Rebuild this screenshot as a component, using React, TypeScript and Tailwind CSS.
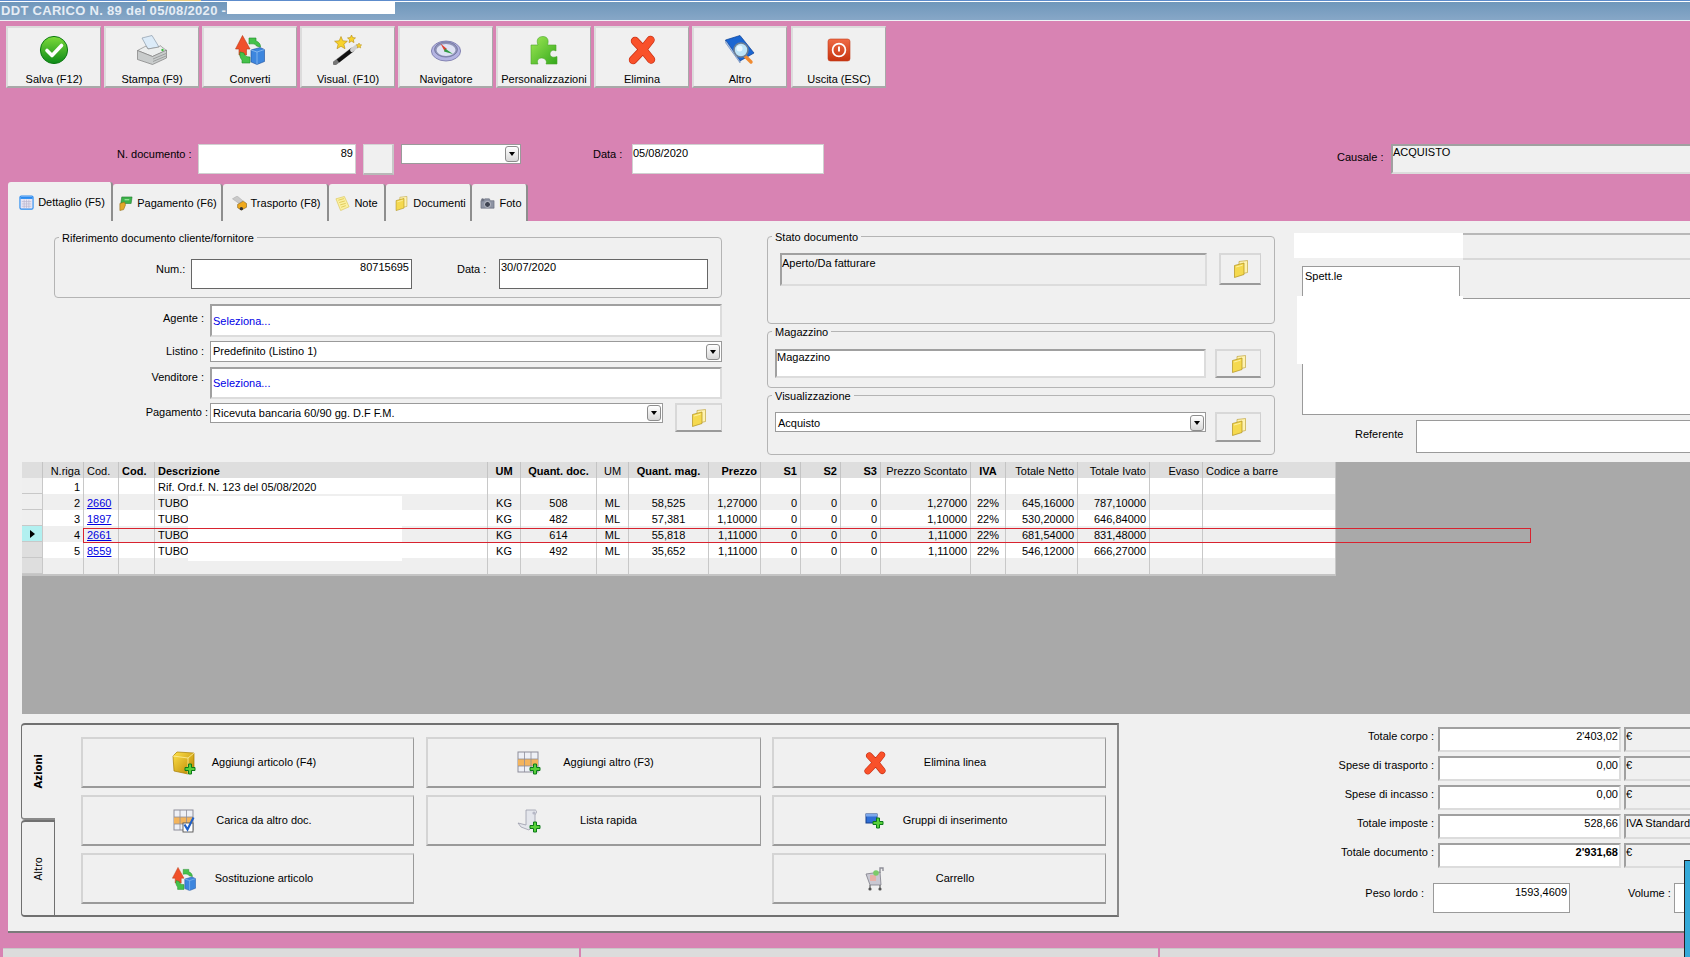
import type { JSX, ReactNode } from 'react'

type IconProps = { className?: string }

function CheckIcon({ className }: IconProps): JSX.Element {
  return (
    <svg viewBox="0 0 30 30" className={className}>
      <defs>
        <linearGradient id="chk" x1="0" y1="0" x2="0" y2="1">
          <stop offset="0" stopColor="#7ddb3a" />
          <stop offset="1" stopColor="#0d8a18" />
        </linearGradient>
      </defs>
      <circle cx="15" cy="15" r="13.6" fill="url(#chk)" stroke="#0e7a14" />
      <path d="M8 15.5l5 5 9.5-10" fill="none" stroke="#fff" strokeWidth="3.6" strokeLinecap="round" strokeLinejoin="round" />
    </svg>
  )
}

function PrinterIcon({ className }: IconProps): JSX.Element {
  return (
    <svg viewBox="0 0 30 30" className={className}>
      <path d="M5 3l10-2.5 7 11.5-11 2z" fill="#dcebf8" stroke="#8b9bab" strokeWidth="0.7" />
      <path d="M.5 15.5L9 11l2 3 11-2 1-1.5 6.5 5-14 6z" fill="#eceeee" stroke="#8a8a8a" strokeWidth="0.7" />
      <path d="M.5 15.5l15 6 14-6.5v8l-14 6.5-15-5z" fill="#c9cccc" stroke="#7d7d7d" strokeWidth="0.7" />
      <path d="M16 24l13-5.5M16 26.5l13-5.5" stroke="#8f9292" strokeWidth="0.8" />
      <circle cx="25.5" cy="15" r="1.2" fill="#3fbf3f" />
    </svg>
  )
}

function ConvertIcon({ className }: IconProps): JSX.Element {
  return (
    <svg viewBox="0 0 30 30" className={className}>
      <path d="M7.5.5L15 14h-3.5v6H4v-6H.5z" fill="#f0502a" stroke="#b93a16" strokeWidth="0.6" />
      <path d="M14 3h7v3c3 1 4.5 3 4.5 6l-4-1c-1-2-3-2.5-7.5-2z" fill="#45c24a" stroke="#1f8a2a" strokeWidth="0.6" />
      <path d="M5 17l4 1c.5 3 2.5 4 6 4v6H7v-3c-2-2-2.5-5-2-8z" fill="#45c24a" stroke="#1f8a2a" strokeWidth="0.6" />
      <path d="M16 15l9-2.5 4.5 2v12L22 29.5 16 27z" fill="#3d86de" stroke="#1c4f9c" strokeWidth="0.6" />
      <path d="M16 15l6 2 7.5-2.5M22 17v12.5" fill="none" stroke="#9cc6f3" strokeWidth="0.7" />
    </svg>
  )
}

function WandIcon({ className }: IconProps): JSX.Element {
  return (
    <svg viewBox="0 0 30 30" className={className}>
      <path d="M2 28L19 15" stroke="#777" strokeWidth="4.6" strokeLinecap="round" />
      <path d="M5 26L19 15" stroke="#111" strokeWidth="3.6" />
      <path d="M19 15l5-4" stroke="#cfcfcf" strokeWidth="4" strokeLinecap="round" />
      <path d="M8 1.5l1.8 4.3 4.6.4-3.5 3 1.1 4.5-4-2.4-4 2.4 1.1-4.5-3.5-3 4.6-.4z" fill="#f7d22c" stroke="#b58a10" strokeWidth="0.6" />
      <path d="M18.5 0l1.2 2.6 2.8.3-2.1 1.9.6 2.8-2.5-1.4-2.5 1.4.6-2.8-2.1-1.9 2.8-.3z" fill="#f7d22c" stroke="#b58a10" strokeWidth="0.6" />
      <path d="M26 8l.8 1.7 1.9.2-1.4 1.3.4 1.8-1.7-1-1.7 1 .4-1.8-1.4-1.3 1.9-.2z" fill="#f7d22c" stroke="#b58a10" strokeWidth="0.5" />
    </svg>
  )
}

function CompassIcon({ className }: IconProps): JSX.Element {
  return (
    <svg viewBox="0 0 30 30" className={className}>
      <ellipse cx="15" cy="16" rx="14.6" ry="10" fill="#b4b4e2" stroke="#7474a6" strokeWidth="0.8" />
      <ellipse cx="15" cy="14.5" rx="11.5" ry="7.6" fill="#8f93b8" stroke="#6a6d96" strokeWidth="0.7" />
      <ellipse cx="15" cy="15" rx="9.5" ry="6" fill="#dfe2f4" />
      <path d="M9.5 8.5l6.5 5.5-2.5 2z" fill="#e0402f" />
      <path d="M14 13.5l8 5.5-9-2.5z" fill="#2f9a44" />
    </svg>
  )
}

function PuzzleIcon({ className }: IconProps): JSX.Element {
  return (
    <svg viewBox="0 0 30 30" className={className}>
      <defs>
        <linearGradient id="pzl" x1="0" y1="0" x2="1" y2="1">
          <stop offset="0" stopColor="#9fe855" />
          <stop offset="1" stopColor="#33a81c" />
        </linearGradient>
      </defs>
      <path
        d="M2 10H9C7 5 9 1.5 14 1.5S20 6 18.5 10H27V16C24 14 21 16 21 19S24 23 28 21.5V29H17C18.5 26 16 23 12.5 23S7.5 26 9 29H2Z"
        fill="url(#pzl)"
        stroke="#4aa62a"
        strokeWidth="0.6"
      />
    </svg>
  )
}

function CrossIcon({ className }: IconProps): JSX.Element {
  return (
    <svg viewBox="0 0 30 30" className={className}>
      <path d="M8 6l8 8.5M23.5 5L16 14.5M16 14.5L6 25M16 14.5l8 10" stroke="#c22c12" strokeWidth="8.4" strokeLinecap="round" fill="none" />
      <path d="M8 6l8 8.5M23.5 5L16 14.5M16 14.5L6 25M16 14.5l8 10" stroke="#f9512a" strokeWidth="7" strokeLinecap="round" fill="none" />
    </svg>
  )
}

function BookIcon({ className }: IconProps): JSX.Element {
  return (
    <svg viewBox="0 0 30 30" className={className}>
      <path d="M.5 5L15 .5 29 18 15 26z" fill="#1a66d2" stroke="#0c3f94" strokeWidth="0.7" />
      <path d="M.5 5L15 26v1.8L.8 8z" fill="#bcd0ea" stroke="#0c3f94" strokeWidth="0.4" />
      <path d="M20 21l6 6" stroke="#f08a30" strokeWidth="3.4" strokeLinecap="round" />
      <circle cx="16" cy="15" r="7" fill="#bde4f8" stroke="#6d7f94" strokeWidth="1.6" />
      <circle cx="14.5" cy="13.5" r="3" fill="#eaf8ff" />
    </svg>
  )
}

function PowerIcon({ className }: IconProps): JSX.Element {
  return (
    <svg viewBox="0 0 30 30" className={className}>
      <defs>
        <linearGradient id="pow" x1="0" y1="0" x2="0" y2="1">
          <stop offset="0" stopColor="#ef6a45" />
          <stop offset="1" stopColor="#c7330f" />
        </linearGradient>
      </defs>
      <rect x="4" y="4" width="22" height="22" rx="2.5" fill="url(#pow)" stroke="#c23c1c" strokeWidth="0.6" />
      <circle cx="15" cy="15" r="6.4" fill="none" stroke="#fff" strokeWidth="1.7" />
      <path d="M15 11.4v5" stroke="#fff" strokeWidth="1.9" />
    </svg>
  )
}

function FolderIcon({ className }: IconProps): JSX.Element {
  return (
    <svg viewBox="0 0 16 18" className={className}>
      <path d="M6 1.5l8.5-1v12l-8.5 2z" fill="#fff3b0" stroke="#b99a2a" strokeWidth="0.6" />
      <path d="M1.5 5.5L11 3v11.5l-9.5 3z" fill="#f5d94e" stroke="#b0901c" strokeWidth="0.7" />
      <path d="M3 7l6.5-1.8" stroke="#fff6b8" strokeWidth="0.8" />
    </svg>
  )
}

function CalendarIcon({ className }: IconProps): JSX.Element {
  return (
    <svg viewBox="0 0 16 16" className={className}>
      <rect x="1" y="1" width="14" height="14" rx="1.5" fill="#e8e6f4" stroke="#2a8cf0" strokeWidth="1.2" />
      <path d="M1.5 3h13" stroke="#2a8cf0" strokeWidth="2.4" />
      <path d="M3 7h10M3 9.5h10M3 12h10M5.5 5v9M8 5v9M10.5 5v9" stroke="#b7b4cc" strokeWidth="0.7" />
    </svg>
  )
}

function MoneyIcon({ className }: IconProps): JSX.Element {
  return (
    <svg viewBox="0 0 16 16" className={className}>
      <path d="M4 1h11l-1 7H3z" fill="#3cb24a" stroke="#1d7a2a" strokeWidth="0.6" />
      <path d="M2 8l5-1.5 1 3-2 5-4 1z" fill="#e2a92a" stroke="#8f6a12" strokeWidth="0.6" />
      <path d="M7 4h5" stroke="#a5eaa5" strokeWidth="1.2" />
    </svg>
  )
}

function TruckIcon({ className }: IconProps): JSX.Element {
  return (
    <svg viewBox="0 0 16 16" className={className}>
      <path d="M.5 3l5-3 6 5-4 3z" fill="#c9c9c9" stroke="#a0a0a0" strokeWidth="0.5" />
      <path d="M6 9l6-3.5 3.5 2.5v4L10 15l-4-2.5z" fill="#efa91c" stroke="#7d5a10" strokeWidth="0.6" />
      <circle cx="10" cy="13.5" r="1.8" fill="#333" />
    </svg>
  )
}

function NoteIcon({ className }: IconProps): JSX.Element {
  return (
    <svg viewBox="0 0 16 16" className={className}>
      <path d="M1 3l9-2.5 5 11-9 4z" fill="#fbf0a0" stroke="#dcc75a" strokeWidth="0.7" />
      <path d="M3.5 4.5l6-1.7M4.5 7l6-1.7M5.5 9.5l6-1.7M6.5 12l5-1.7" stroke="#d4b93c" strokeWidth="0.7" />
    </svg>
  )
}

function CameraIcon({ className }: IconProps): JSX.Element {
  return (
    <svg viewBox="0 0 16 16" className={className}>
      <path d="M1 5h3l1-2h5l1 2h4v8H1z" fill="#8d93a3" stroke="#5e6372" strokeWidth="0.6" />
      <circle cx="8" cy="9" r="3.2" fill="#3f4452" stroke="#d5d8e0" strokeWidth="0.9" />
      <circle cx="2.8" cy="4" r="1.6" fill="#6d7280" />
    </svg>
  )
}

// croce verde in basso a destra, comune alle icone "aggiungi" (viewBox 24)
function PlusMark(): JSX.Element {
  return (
    <path
      d="M16.5 13h3v3.5h3.5v3h-3.5v3.5h-3v-3.5H13v-3h3.5z"
      fill="#58d13a"
      stroke="#0c7a1a"
      strokeWidth="1"
    />
  )
}

function BoxPlusIcon({ className }: IconProps): JSX.Element {
  return (
    <svg viewBox="0 0 24 24" className={className}>
      <defs>
        <linearGradient id="box" x1="0" y1="0" x2="1" y2="1">
          <stop offset="0" stopColor="#ffe24a" />
          <stop offset="1" stopColor="#b98400" />
        </linearGradient>
      </defs>
      <path d="M1 5l4-4 17 1v15l-6 6-14-3z" fill="url(#box)" stroke="#a67c00" strokeWidth="0.7" />
      <path d="M1 5l15 2 6-5M16 7v16" fill="none" stroke="#fff0a0" strokeWidth="0.8" />
      <PlusMark />
    </svg>
  )
}

function GridPlusIcon({ className }: IconProps): JSX.Element {
  return (
    <svg viewBox="0 0 24 24" className={className}>
      <rect x="1" y="1" width="20" height="20" fill="#eef0f6" stroke="#8d8d9a" />
      <rect x="1" y="8" width="20" height="7" fill="#f3b45c" />
      <path d="M7.5 1v20M14 1v20M1 8h20M1 15h20" stroke="#8d8d9a" strokeWidth="0.8" />
      <PlusMark />
    </svg>
  )
}

function GridCheckIcon({ className }: IconProps): JSX.Element {
  return (
    <svg viewBox="0 0 24 24" className={className}>
      <rect x="2" y="1" width="19" height="20" fill="#eef0f6" stroke="#8d8d9a" />
      <rect x="2" y="8" width="19" height="7" fill="#f3b45c" />
      <path d="M8 1v20M14.5 1v20M2 8h19M2 15h19" stroke="#8d8d9a" strokeWidth="0.8" />
      <rect x="11" y="14" width="10" height="9" fill="#fff" stroke="#555" strokeWidth="0.9" />
      <path d="M12.5 15.5l3 5 6-12" fill="none" stroke="#2060c8" strokeWidth="2.2" />
    </svg>
  )
}

function ScrollPlusIcon({ className }: IconProps): JSX.Element {
  return (
    <svg viewBox="0 0 24 24" className={className}>
      <path d="M9 1h9c2 0 2 4 0 4v10l-6 6-8-3-3-4 8 2z" fill="#e4e6ec" stroke="#9a9cab" strokeWidth="0.8" />
      <circle cx="17" cy="4" r="1.6" fill="#b6b8c6" />
      <PlusMark />
    </svg>
  )
}

function LayerPlusIcon({ className }: IconProps): JSX.Element {
  return (
    <svg viewBox="0 0 24 24" className={className}>
      <rect x="3" y="5" width="11" height="9" fill="#2f6fd6" stroke="#163f8a" />
      <rect x="3" y="5" width="11" height="2.5" fill="#7ea8ea" />
      <g transform="translate(-3 -4)">
        <PlusMark />
      </g>
    </svg>
  )
}

function CartIcon({ className }: IconProps): JSX.Element {
  return (
    <svg viewBox="0 0 24 24" className={className}>
      <path d="M3 7l14-2 1 13H7z" fill="#c9c8d2" stroke="#7d7d88" strokeWidth="0.8" />
      <rect x="7" y="8" width="6" height="6" fill="#e8b0a8" />
      <circle cx="13" cy="6" r="2.8" fill="#7ccb6a" />
      <path d="M17 6V1h3v3" fill="none" stroke="#8f8f98" strokeWidth="1.4" />
      <path d="M7 18v3M17 18v3" stroke="#777" strokeWidth="1.4" />
      <circle cx="7" cy="22" r="1.6" fill="#555" />
      <circle cx="17" cy="22" r="1.6" fill="#555" />
    </svg>
  )
}

function SelectArrow(): JSX.Element {
  return (
    <span className="mr-[1px] flex h-[16px] w-[14px] shrink-0 items-center justify-center rounded-[3px] border border-[#8c8c8c] bg-gradient-to-b from-white to-[#d8d8d8]">
      <span className="h-0 w-0 border-x-[3px] border-t-[4px] border-x-transparent border-t-black" />
    </span>
  )
}

function Select({ value, className }: { value?: string; className: string }): JSX.Element {
  return (
    <div className={`flex items-center justify-between border border-[#9a9a9a] bg-white pl-[2px] ${className}`}>
      <span>{value}</span>
      <SelectArrow />
    </div>
  )
}

function SunkenField({ children, className }: { children?: ReactNode; className: string }): JSX.Element {
  return (
    <div className={`border-2 border-t-[#a0a0a0] border-l-[#a0a0a0] border-r-[#dcdcdc] border-b-[#dcdcdc] ${className}`}>
      {children}
    </div>
  )
}

function FolderButton({ className }: { className: string }): JSX.Element {
  return (
    <button className={`flex items-center justify-center border-t-2 border-l-2 border-t-[#d8d8d8] border-l-[#d8d8d8] border-r border-r-[#d0d0d0] border-b-2 border-b-[#9a9a9a] bg-[#f0f0f0] ${className}`}>
      <FolderIcon className="h-[18px] w-[16px]" />
    </button>
  )
}

function Group({ title, className, children }: { title: string; className: string; children: ReactNode }): JSX.Element {
  return (
    <div className={`relative rounded-[4px] border border-[#b4b4b4] ${className}`}>
      <span className="absolute -top-[7px] left-[4px] bg-[#f0f0f0] px-[3px] leading-[14px]">{title}</span>
      {children}
    </div>
  )
}

const TOOLBAR = [
  { label: 'Salva (F12)', Icon: CheckIcon },
  { label: 'Stampa (F9)', Icon: PrinterIcon },
  { label: 'Converti', Icon: ConvertIcon },
  { label: 'Visual. (F10)', Icon: WandIcon },
  { label: 'Navigatore', Icon: CompassIcon },
  { label: 'Personalizzazioni', Icon: PuzzleIcon },
  { label: 'Elimina', Icon: CrossIcon },
  { label: 'Altro', Icon: BookIcon },
  { label: 'Uscita (ESC)', Icon: PowerIcon },
]

const TABS = [
  { label: 'Dettaglio (F5)', Icon: CalendarIcon, width: 'w-[105px] pl-[5px]', active: true },
  { label: 'Pagamento (F6)', Icon: MoneyIcon, width: 'w-[110px] pl-[1px]', active: false },
  { label: 'Trasporto (F8)', Icon: TruckIcon, width: 'w-[106px] pl-[2px]', active: false },
  { label: 'Note', Icon: NoteIcon, width: 'w-[57px]', active: false },
  { label: 'Documenti', Icon: FolderIcon, width: 'w-[86px] pl-[4px]', active: false },
  { label: 'Foto', Icon: CameraIcon, width: 'w-[56px] pl-[4px]', active: false },
]

const GRID_COLS =
  'grid-cols-[21px_41px_35px_36px_333px_33px_76px_32px_80px_52px_40px_40px_40px_90px_35px_72px_72px_53px_133px]'

const HEADERS: { label: string; cls: string }[] = [
  { label: '', cls: '' },
  { label: 'N.riga', cls: 'text-right' },
  { label: 'Cod.', cls: 'text-left' },
  { label: 'Cod.', cls: 'text-left font-bold' },
  { label: 'Descrizione', cls: 'text-left font-bold' },
  { label: 'UM', cls: 'text-center font-bold' },
  { label: 'Quant. doc.', cls: 'text-center font-bold' },
  { label: 'UM', cls: 'text-center' },
  { label: 'Quant. mag.', cls: 'text-center font-bold' },
  { label: 'Prezzo', cls: 'text-right font-bold' },
  { label: 'S1', cls: 'text-right font-bold' },
  { label: 'S2', cls: 'text-right font-bold' },
  { label: 'S3', cls: 'text-right font-bold' },
  { label: 'Prezzo Scontato', cls: 'text-right' },
  { label: 'IVA', cls: 'text-center font-bold' },
  { label: 'Totale Netto', cls: 'text-right' },
  { label: 'Totale Ivato', cls: 'text-right' },
  { label: 'Evaso', cls: 'text-right' },
  { label: 'Codice a barre', cls: 'text-left' },
]

const ROWS = [
  ['1', '', 'Rif. Ord.f. N. 123 del 05/08/2020', '', '', '', '', '', '', '', '', '', '', '', ''],
  ['2', '2660', "TUBO '", 'KG', '508', 'ML', '58,525', '1,27000', '0', '0', '0', '1,27000', '22%', '645,16000', '787,10000'],
  ['3', '1897', "TUBO '", 'KG', '482', 'ML', '57,381', '1,10000', '0', '0', '0', '1,10000', '22%', '530,20000', '646,84000'],
  ['4', '2661', "TUBO '", 'KG', '614', 'ML', '55,818', '1,11000', '0', '0', '0', '1,11000', '22%', '681,54000', '831,48000'],
  ['5', '8559', "TUBO '", 'KG', '492', 'ML', '35,652', '1,11000', '0', '0', '0', '1,11000', '22%', '546,12000', '666,27000'],
  ['', '', '', '', '', '', '', '', '', '', '', '', '', '', ''],
]

// allineamento delle celle dati: N.riga, Cod., Descrizione, ... Totale Ivato
const CELL_ALIGN = [
  'text-right', 'text-left', 'text-left', 'text-center', 'text-center', 'text-center', 'text-center',
  'text-right', 'text-right', 'text-right', 'text-right', 'text-right', 'text-center', 'text-right', 'text-right',
]

function Cell({ className, children }: { className: string; children?: ReactNode }): JSX.Element {
  return (
    <div className={`h-[16px] overflow-hidden whitespace-nowrap border-r border-r-[#c8c8c8] px-[3px] leading-[18px] ${className}`}>
      {children}
    </div>
  )
}

function DataGrid(): JSX.Element {
  return (
    <div className="relative h-[252px] w-full bg-[#a9a9a9]">
      <div className={`grid w-[1314px] ${GRID_COLS} border-r-2 border-b-2 border-[#c4c4c4]`}>
        {HEADERS.map((h, i) => (
          <div
            key={i}
            className={`h-[16px] overflow-hidden whitespace-nowrap border-r border-r-[#c4c4c4] bg-[#dedede] px-[3px] leading-[18px] ${h.cls}`}
          >
            {h.label}
          </div>
        ))}
        {ROWS.map((row, r) => {
          const rowBg = r === 1 || r === 3 || r === 5 ? 'bg-[#efefef]' : 'bg-white'
          const handle = r === 3 ? 'bg-[#b2f0f0]' : r > 3 ? 'bg-[#dedede]' : 'bg-[#efefef]'
          return [
            <div key={`h${r}`} className={`flex h-[16px] items-center justify-center border-r border-b border-[#c8c8c8] ${handle}`}>
              {r === 3 && <span className="h-0 w-0 border-y-[4px] border-l-[5px] border-y-transparent border-l-black" />}
            </div>,
            ...row.map((v, c) => (
              <Cell key={`${r}-${c}`} className={`${rowBg} ${CELL_ALIGN[c]}`}>
                {c === 1 && v ? <span className="text-[#0000e0] underline">{v}</span> : v}
              </Cell>
            )).flatMap((el, c) => (c === 1 ? [el, <Cell key={`${r}-x`} className={rowBg} />] : [el])),
            <Cell key={`${r}-e`} className={rowBg} />,
            <Cell key={`${r}-b`} className={rowBg} />,
          ]
        })}
      </div>
      {/* righe oscurate nella descrizione */}
      <div className="absolute left-[166px] top-[34px] h-[65px] w-[214px] bg-white" />
      {/* riga selezionata */}
      <div className="absolute left-[61px] top-[66px] h-[15px] w-[1448px] border border-[#d8232f]" />
    </div>
  )
}

function ActionButton({ label, Icon }: { label: string; Icon: (p: IconProps) => JSX.Element }): JSX.Element {
  return (
    <button className="flex h-[51px] items-center border-t-2 border-l-2 border-t-[#d4d4d4] border-l-[#d4d4d4] border-r border-r-[#9a9a9a] border-b-2 border-b-[#9a9a9a] bg-[#f0f0f0] pl-[89px]">
      <Icon className="h-[24px] w-[24px]" />
      <span className="w-[136px] text-center">{label}</span>
    </button>
  )
}

function TotalRow({ label, value, unit, bold }: { label: string; value: string; unit: string; bold?: boolean }): JSX.Element {
  return (
    <div className="flex h-[25px]">
      <span className="w-[315px] pt-[2px] text-right leading-[14px]">{label}</span>
      <SunkenField className={`ml-[4px] w-[183px] bg-white pr-[1px] text-right leading-[14px] ${bold ? 'font-bold' : ''}`}>{value}</SunkenField>
      <SunkenField className="-mr-[4px] ml-[3px] flex-1 overflow-hidden whitespace-nowrap bg-[#f0f0f0] leading-[14px]">{unit}</SunkenField>
    </div>
  )
}

export default function App(): JSX.Element {
  return (
    <div className="relative flex h-[957px] w-[1690px] flex-col overflow-hidden bg-[#d883b3] font-['Liberation_Sans',Arial,sans-serif] text-[11px] text-black">
      {/* barra del titolo */}
      <div className="flex h-[1px] bg-[#5d8ccc]">
        <div className="ml-[147px] w-[54px] bg-[#e8c878]" />
      </div>
      <div className="h-[1px] bg-white" />
      <div className="flex h-[18px] items-center bg-gradient-to-b from-[#6f97bb] to-[#87a7c7] pl-[1px]">
        <span className="w-[226px] whitespace-nowrap text-[13px] font-bold tracking-[0.3px] text-[#e6edf5]">DDT CARICO N. 89 del 05/08/2020 -</span>
        <div className="h-[12px] w-[168px] self-start bg-white" />
      </div>
      <div className="h-[1px] bg-[#eef2f6]" />

      {/* pulsanti */}
      <div className="flex gap-[3px] pl-[6px] pt-[5px]">
        {TOOLBAR.map(({ label, Icon }) => (
          <button
            key={label}
            className="flex h-[62px] w-[95px] flex-col items-center border-t-2 border-l-2 border-t-[#dcdcdc] border-l-[#dcdcdc] border-r border-r-[#a8a8a8] border-b-2 border-b-[#a8a8a8] bg-[#f0f0f0] pt-[7px] last:ml-[1px]"
          >
            <Icon className="h-[30px] w-[30px]" />
            <span className="mt-[7px] whitespace-nowrap leading-[14px]">{label}</span>
          </button>
        ))}
      </div>

      {/* testata documento */}
      <div className="mt-[56px] flex h-[30px] pl-[117px]">
        <span className="w-[75px] pt-[3px] whitespace-nowrap leading-[14px]">N. documento :</span>
        <div className="ml-[6px] h-[30px] w-[158px] border border-[#d0d0d0] bg-white pr-[2px] pt-[1px] text-right leading-[14px]">89</div>
        <div className="ml-[7px] h-[31px] w-[31px] border-t border-l border-[#d4d4d4] border-r-2 border-b-2 border-r-[#c8c8c8] border-b-[#b8b8b8] bg-[#f0f0f0]" />
        <Select className="ml-[7px] h-[20px] w-[120px]" />
        <span className="ml-[72px] w-[29px] pt-[3px] whitespace-nowrap leading-[14px]">Data :</span>
        <div className="ml-[10px] h-[30px] w-[192px] border border-[#d0d0d0] bg-white pt-[1px] leading-[14px]">05/08/2020</div>
        <span className="ml-[513px] w-[46px] pt-[6px] whitespace-nowrap leading-[14px]">Causale :</span>
        <SunkenField className="-mr-[4px] ml-[8px] h-[30px] flex-1 bg-[#f0f0f0] leading-[12px]">ACQUISTO</SunkenField>
      </div>

      {/* schede */}
      <div className="mt-[8px] flex h-[39px] items-end pl-[8px]">
        {TABS.map(({ label, Icon, width, active }) => (
          <div
            key={label}
            className={`flex ${width} items-center justify-center gap-[4px] rounded-t-[3px] border-r-2 border-r-[#8e8e8e] bg-[#f0f0f0] ${active ? 'h-[39px] pt-[1px]' : 'h-[37px] pt-[2px]'}`}
          >
            <Icon className="h-[15px] w-[15px]" />
            <span className="whitespace-nowrap">{label}</span>
          </div>
        ))}
      </div>

      {/* pannello principale */}
      <div className="ml-[8px] flex h-[712px] flex-col border-b-2 border-b-[#7a7a7a] bg-[#f0f0f0]">
        <div className="flex h-[241px] pl-[46px]">
          {/* colonna sinistra */}
          <div className="mt-[16px] w-[668px]">
            <Group title="Riferimento documento cliente/fornitore" className="flex h-[61px] pl-[101px] pt-[21px]">
              <span className="w-[30px] pt-[3px] leading-[14px]">Num.:</span>
              <div className="ml-[5px] h-[30px] w-[221px] border border-[#666] bg-white pr-[2px] text-right leading-[14px]">80715695</div>
              <span className="ml-[45px] w-[31px] pt-[3px] leading-[14px]">Data :</span>
              <div className="ml-[11px] h-[30px] w-[209px] border border-[#666] bg-white pl-[1px] leading-[14px]">30/07/2020</div>
            </Group>
            <div className="mt-[6px] flex h-[33px]">
              <span className="w-[150px] pt-[7px] text-right leading-[14px]">Agente :</span>
              <SunkenField className="ml-[6px] flex-1 bg-white pl-[1px] pt-[8px] leading-[14px] text-[#0000e6]">Seleziona...</SunkenField>
            </div>
            <div className="mt-[4px] flex h-[21px]">
              <span className="w-[150px] pt-[3px] text-right leading-[14px]">Listino :</span>
              <Select value="Predefinito (Listino 1)" className="ml-[6px] flex-1" />
            </div>
            <div className="mt-[5px] flex h-[32px]">
              <span className="w-[150px] pt-[3px] text-right leading-[14px]">Venditore :</span>
              <SunkenField className="ml-[6px] flex-1 bg-white pl-[1px] pt-[7px] leading-[14px] text-[#0000e6]">Seleziona...</SunkenField>
            </div>
            <div className="mt-[4px] flex">
              <span className="w-[154px] pt-[2px] text-right leading-[14px]">Pagamento :</span>
              <Select value="Ricevuta bancaria 60/90 gg. D.F F.M." className="ml-[2px] h-[20px] w-[453px]" />
              <FolderButton className="ml-[12px] h-[29px] w-[47px]" />
            </div>
          </div>

          {/* colonna centrale */}
          <div className="ml-[45px] mt-[15px] w-[508px]">
            <Group title="Stato documento" className="h-[88px] pl-[12px] pt-[16px]">
              <div className="flex">
                <SunkenField className="h-[33px] w-[427px] bg-[#efefef] pt-[1px] leading-[14px]">Aperto/Da fatturare</SunkenField>
                <FolderButton className="ml-[12px] h-[32px] w-[42px]" />
              </div>
            </Group>
            <Group title="Magazzino" className="mt-[7px] flex h-[57px] pl-[7px] pt-[17px]">
              <SunkenField className="h-[29px] w-[431px] bg-white leading-[12px]">Magazzino</SunkenField>
              <FolderButton className="ml-[9px] h-[29px] w-[46px]" />
            </Group>
            <Group title="Visualizzazione" className="mt-[7px] flex h-[60px] pl-[7px] pt-[16px]">
              <Select value="Acquisto" className="h-[20px] w-[431px] pt-[2px]" />
              <FolderButton className="ml-[9px] h-[30px] w-[46px]" />
            </Group>
          </div>

          {/* colonna destra */}
          <div className="ml-[19px] mt-[12px] flex-1">
            <div className="flex h-[27px]">
              <div className="h-[25px] w-[169px] bg-white" />
              <div className="flex-1 border-t-2 border-b-2 border-t-[#b8b8b8] border-b-[#d8d8d8]" />
            </div>
            <div className="ml-[8px] mt-[6px] h-[32px] w-[158px] border border-b-0 border-[#9a9a9a] bg-white pl-[2px] pt-[2px] leading-[14px]">Spett.le</div>
            <div className="relative -mr-[4px] ml-[8px] h-[117px] border border-[#9a9a9a] bg-white">
              <div className="absolute -left-[6px] -top-[3px] h-[68px] w-[166px] bg-white" />
            </div>
            <div className="mt-[5px] flex h-[33px]">
              <span className="ml-[61px] w-[50px] pt-[7px] leading-[14px]">Referente</span>
              <div className="-mr-[4px] ml-[11px] flex-1 border border-[#9a9a9a] bg-white" />
            </div>
          </div>
        </div>

        {/* griglia righe */}
        <div className="ml-[14px]">
          <DataGrid />
        </div>

        {/* parte inferiore */}
        <div className="flex pl-[13px] pt-[9px]">
          <div className="flex h-[194px] w-[1098px]">
            <div className="flex w-[34px] flex-col">
              <div className="flex h-[97px] items-center justify-center rounded-l-[4px] border-t-2 border-l border-t-[#707070] border-l-[#707070] border-b-2 border-b-[#8a8a8a] bg-[#f0f0f0]">
                <span className="rotate-180 font-['DejaVu_Sans',sans-serif] text-[10px] font-bold [writing-mode:vertical-rl]">Azioni</span>
              </div>
              <div className="flex h-[97px] items-center justify-center rounded-l-[4px] border-y-2 border-l border-r border-[#707070] bg-[#f0f0f0]">
                <span className="rotate-180 font-['DejaVu_Sans',sans-serif] text-[10px] [writing-mode:vertical-rl]">Altro</span>
              </div>
            </div>
            <div className="flex-1 border-t-2 border-b-2 border-r-2 border-t-[#707070] border-b-[#707070] border-r-[#8a8a8a] pl-[26px] pt-[12px]">
              <div className="grid grid-cols-[333px_335px_334px] gap-x-[11.5px] gap-y-[7px]">
                <ActionButton label="Aggiungi articolo (F4)" Icon={BoxPlusIcon} />
                <ActionButton label="Aggiungi altro (F3)" Icon={GridPlusIcon} />
                <ActionButton label="Elimina linea" Icon={CrossIcon} />
                <ActionButton label="Carica da altro doc." Icon={GridCheckIcon} />
                <ActionButton label="Lista rapida" Icon={ScrollPlusIcon} />
                <ActionButton label="Gruppi di inserimento" Icon={LayerPlusIcon} />
                <ActionButton label="Sostituzione articolo" Icon={ConvertIcon} />
                <div />
                <ActionButton label="Carrello" Icon={CartIcon} />
              </div>
            </div>
          </div>

          <div className="-mt-[9px] flex-1 pt-[13px]">
            <div className="flex flex-col gap-[4px]">
              <TotalRow label="Totale corpo :" value="2'403,02" unit="€" />
              <TotalRow label="Spese di trasporto :" value="0,00" unit="€" />
              <TotalRow label="Spese di incasso :" value="0,00" unit="€" />
              <TotalRow label="Totale imposte :" value="528,66" unit="IVA Standard" />
              <TotalRow label="Totale documento :" value="2'931,68" unit="€" bold />
            </div>
            <div className="mt-[15px] flex h-[30px]">
              <span className="w-[305px] pt-[3px] text-right leading-[14px]">Peso lordo :</span>
              <div className="ml-[9px] w-[137px] border border-[#9a9a9a] bg-white pr-[2px] pt-[1px] text-right leading-[14px]">1593,4609</div>
              <span className="ml-[58px] w-[40px] whitespace-nowrap pt-[3px] leading-[14px]">Volume :</span>
              <div className="ml-[6px] flex-1 border border-[#9a9a9a] bg-white" />
            </div>
          </div>
        </div>
      </div>

      {/* barra di stato */}
      <div className="mt-[15px] flex h-[9px] gap-[2px] pl-[3px]">
        <div className="w-[576px] border-t border-[#c8c8c8] bg-[#dcdcdc]" />
        <div className="w-[577px] border-t border-[#c8c8c8] bg-[#dcdcdc]" />
        <div className="flex-1 border-t border-[#c8c8c8] bg-[#dcdcdc]" />
      </div>

      {/* finestra sovrapposta sul bordo destro */}
      <div className="absolute left-[1684px] top-[860px] h-[97px] w-[6px] border-t border-l border-[#222] bg-[#35a9d8]" />
    </div>
  )
}
